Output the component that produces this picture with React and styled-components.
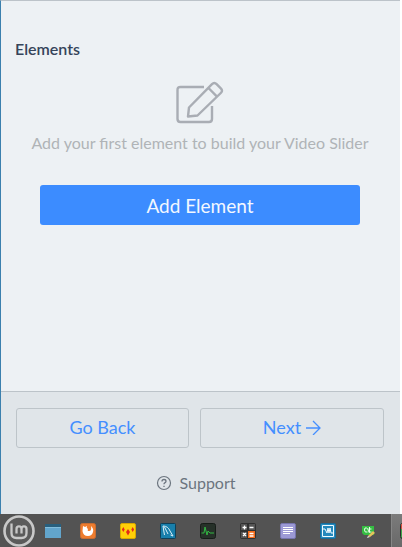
import React from "react";
import styled, { createGlobalStyle } from "styled-components";

const Global = createGlobalStyle`
  *, *::before, *::after { box-sizing: border-box; }
  body { margin: 0; background: #ffffff; font-family: Lato, "Open Sans", sans-serif; }
  button { font: inherit; cursor: pointer; }
`;
const Page = styled.div`
  min-height: 100vh;
  display: flex;
  flex-direction: column;
`;
const Panel = styled.main`
  flex: 1;
  display: flex;
  flex-direction: column;
  margin-right: 2px;
  border-left: 1px solid #3b80ae;
  border-top: 1px solid #bcc3c9;
  background: #edf1f4;
`;
const Content = styled.section`
  flex: 1;
  padding: 38px 15px 0 14px;
`;
const Heading = styled.h1`
  margin: 0;
  font-size: 16px;
  line-height: 20px;
  font-weight: 600;
  color: #35445a;
`;
const EmptyState = styled.div`
  display: flex;
  flex-direction: column;
  align-items: center;
  padding: 22px 8px 0;
`;
const Hint = styled.p`
  margin: 8px 0 31px;
  font-size: 16px;
  line-height: 22px;
  color: #b0b4b7;
  white-space: nowrap;
`;
const PrimaryButton = styled.button`
  width: 100%;
  max-width: 320px;
  height: 40px;
  border: 0;
  border-radius: 3px;
  background: #3c8cff;
  color: #f3f8ff;
  && { font-size: 19px; }
`;
const Footer = styled.footer`
  border-top: 1px solid #bcc3c9;
  background: #e0e5e9;
  padding: 16px 16px 20px 15px;
  display: flex;
  flex-direction: column;
  align-items: center;
  gap: 24px;
`;
const Actions = styled.div`
  width: 100%;
  display: grid;
  grid-template-columns: 173fr 184fr;
  gap: 11px;
`;
const OutlineButton = styled.button`
  display: flex;
  align-items: center;
  justify-content: center;
  gap: 4px;
  height: 40px;
  padding: 0 6px 2px;
  border: 1px solid #bdc4c9;
  border-radius: 3px;
  background: transparent;
  color: #448fff;
  && { font-size: 18px; }
`;
const SupportLink = styled.a`
  display: flex;
  align-items: center;
  gap: 7px;
  margin-right: 8px;
  font-size: 16px;
  line-height: 22px;
  color: #6c757f;
  text-decoration: none;
`;
const Taskbar = styled.nav`
  display: flex;
  align-items: center;
  height: 33px;
  overflow: hidden;
  background: #535353;
`;
const Task = styled.button`
  flex: 0 0 ${({ $narrow }) => ($narrow ? 30 : 40)}px;
  height: 33px;
  display: grid;
  place-items: center;
  padding: 0;
  border: 0;
  background: transparent;
`;
const MenuButton = styled(Task)`
  flex-basis: 38px;
`;
const ActiveTask = styled(Task)`
  margin-left: 3px;
  justify-items: start;
  padding-left: 8px;
  background: linear-gradient(#7b7b7b, #696969);
  border-left: 1px solid #868686;
`;

const Icon = ({ size = 16, children }) => (
  <svg width={size} height={size} viewBox={`0 0 ${size} ${size}`} fill="none" aria-hidden="true">{children}</svg>
);

const EditIcon = () => (
  <svg width="48" height="43" viewBox="0 0 48 43" fill="none" stroke="#a9adb4" strokeWidth="2.4" strokeLinejoin="round" aria-hidden="true">
    <path d="M28 6H4.500Q1.500 6 1.500 9v29q0 3 3 3h28.500q3 0 3-3V25" />
    <path d="M12 35.500l1-9L36 3.200q2.300-2.300 4.600 0l4.200 4.200q2.300 2.300 0 4.600L21.500 34.500zM32.500 7l8 8.200" />
  </svg>
);
const ArrowIcon = () => (
  <Icon><path d="M1 9h14M8 2l7 7-7 7" stroke="#448fff" strokeWidth="1.300" /></Icon>
);
const HelpIcon = () => (
  <Icon>
    <circle cx="8" cy="8" r="6.500" stroke="#6c757f" strokeWidth="1.200" />
    <path d="M6 6.500q0-2 2-2t2 1.800q0 1-1.200 1.600Q8 8.300 8 9.300M8 10.700v1.300" stroke="#6c757f" strokeWidth="1.300" />
  </Icon>
);
const MintIcon = () => (
  <Icon size={32}>
    <circle cx="16" cy="16" r="14.500" fill="#5b5b5b" stroke="#c8c8c8" strokeWidth="2.600" />
    <path d="M8.500 8.500v9.500q0 5 5 5h5q5 0 5-5v-4q0-2.600-2.500-2.600t-2.500 2.600v4.500M18.500 14q0-2.600-2.500-2.600t-2.500 2.600v4.500" stroke="#c8c8c8" strokeWidth="2.300" />
  </Icon>
);
const WindowIcon = () => (
  <Icon>
    <path d="M0 1h16v14H0z" fill="#62a5cc" /><path d="M0 1h16v3H0z" fill="#285f7d" /><path d="M0 4.500h16" stroke="#83bddb" />
  </Icon>
);
const FlameIcon = () => (
  <Icon>
    <rect x=".5" y=".5" width="15" height="15" rx="2" fill="#ed7c2e" stroke="#c86d32" />
    <path d="M3 3l2 1 2-1q-1 2 1 3-1 2 1 2 3 0 2-5 3 3 2 6-1 4-5 4-5 0-5.500-5z" fill="#fff" />
  </Icon>
);
const SuitsIcon = () => (
  <Icon>
    <rect x=".5" y=".5" width="15" height="15" rx="1.500" fill="#ffcf08" stroke="#d8a800" />
    <path d="M3.300 4l1.400 2.500L3.300 9 1.900 6.500zM8 6l2 3-2 3.500L6 9zM12.700 4l1.400 2.500L12.700 9l-1.400-2.500z" fill="#e52a19" />
  </Icon>
);
const DolphinIcon = () => (
  <Icon>
    <rect x=".5" y=".5" width="15" height="15" rx="1" fill="#187fab" stroke="#0e4058" />
    <path d="M4.500 12L3.800 8 3 3q5 0 7 5l3 5-2.500-1M4.500 4l3.500 7" stroke="#d9eff7" />
  </Icon>
);
const PulseIcon = () => (
  <Icon>
    <rect x=".5" y=".5" width="15" height="15" rx="2" fill="#263129" stroke="#161d18" />
    <path d="M1.500 10H4l1-6 2 8 1-4 2 2h4" stroke="#31b943" />
  </Icon>
);
const CalculatorIcon = () => (
  <Icon>
    <rect width="16" height="16" rx="2" fill="#303030" />
    <path d="M1 1h6v6H1zM9 1h6v6H9zM1 9h6v6H1z" fill="#555" /><path d="M8 8h7v7H8z" fill="#f46b1a" />
    <path d="M2.500 4.500h4m-2-2v4m5-2h4M3 10l3 3m0-3l-3 3m6.500-2.500h4m-4 2.500h4" stroke="#fff" strokeWidth="1.300" />
  </Icon>
);
const NotesIcon = () => (
  <Icon>
    <rect x=".5" y=".5" width="15" height="15" rx="1.500" fill="#9c99d5" stroke="#7775ae" />
    <path d="M3 4.500h10M3 6.500h10M3 8.500h10M3 10.500h7" stroke="#fff" />
  </Icon>
);
const MonitorIcon = () => (
  <Icon>
    <rect x=".5" y=".5" width="15" height="15" rx="1" fill="#2489bd" stroke="#176b99" />
    <path d="M2.500 2.500h11v11h-11zM3 6h2l2 4 1-5 1 5 1-5 1 5h2" stroke="#eefaff" />
  </Icon>
);
const QtIcon = () => (
  <Icon>
    <path d="M2 3h12v9H4l-2-2z" fill="#35bd42" />
    <path d="M7.500 9q-3 1-3-2t2-2 2 3l1 2m0-6v5h2M8.500 6h3" stroke="#e8ffe9" />
    <path d="M8 13l5-5 2 2-5 4z" fill="#e8c25c" /><path d="M8 13l2 1-3 1z" fill="#eee" />
  </Icon>
);
const ChartIcon = () => (
  <Icon>
    <rect x=".5" y=".5" width="15" height="15" rx="2" fill="#3fa64c" stroke="#2c2c2c" />
    <path d="M1 1h14v5H1z" fill="#d8503f" />
  </Icon>
);

const tasks = [
  ["Browser", FlameIcon], ["Card game", SuitsIcon], ["Database", DolphinIcon],
  ["System monitor", PulseIcon], ["Calculator", CalculatorIcon], ["Notes", NotesIcon],
  ["Activity", MonitorIcon], ["Qt Creator", QtIcon],
];

export default function App() {
  return (
    <Page>
      <Global />
      <Panel>
        <Content>
          <Heading>Elements</Heading>
          <EmptyState>
            <EditIcon />
            <Hint>Add your first element to build your Video Slider</Hint>
            <PrimaryButton type="button">Add Element</PrimaryButton>
          </EmptyState>
        </Content>
        <Footer>
          <Actions>
            <OutlineButton type="button">Go Back</OutlineButton>
            <OutlineButton type="button">Next <ArrowIcon /></OutlineButton>
          </Actions>
          <SupportLink href="#support"><HelpIcon />Support</SupportLink>
        </Footer>
      </Panel>
      <Taskbar aria-label="Taskbar">
        <MenuButton type="button" aria-label="Menu"><MintIcon /></MenuButton>
        <Task type="button" $narrow aria-label="Show desktop"><WindowIcon /></Task>
        {tasks.map(([label, Drawing]) => (
          <Task type="button" key={label} aria-label={label}><Drawing /></Task>
        ))}
        <ActiveTask type="button" aria-label="Active window"><ChartIcon /></ActiveTask>
      </Taskbar>
    </Page>
  );
}
